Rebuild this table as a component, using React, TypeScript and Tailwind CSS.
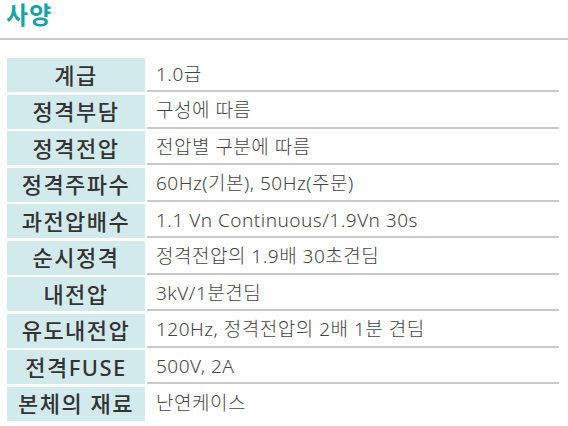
import React from "react";

const rows: [string, string][] = [
  ["계급", "1.0급"],
  ["정격부담", "구성에 따름"],
  ["정격전압", "전압별 구분에 따름"],
  ["정격주파수", "60Hz(기본), 50Hz(주문)"],
  ["과전압배수", "1.1 Vn Continuous/1.9Vn 30s"],
  ["순시정격", "정격전압의 1.9배 30초견딤"],
  ["내전압", "3kV/1분견딤"],
  ["유도내전압", "120Hz, 정격전압의 2배 1분 견딤"],
  ["전격FUSE", "500V, 2A"],
  ["본체의 재료", "난연케이스"],
];

export default function App() {
  return (
    <div
      className="w-[568px] h-[426px] bg-white overflow-hidden"
      style={{ fontFamily: '"Noto Sans", "Noto Sans CJK KR", sans-serif' }}
    >
      <div className="h-[38px] pl-[6px] flex items-center pb-[8px]">
        <h2 className="text-[24px] leading-[30px] font-bold text-[#17a2a5] tracking-[1px]">사양</h2>
      </div>
      <div className="h-[2px] bg-[#c9c9c9]" />
      <div className="pl-[7px] pr-[9px] pt-[18px] flex flex-col gap-[2.5px]">
        {rows.map(([k, v], i) => (
          <div key={i} className="flex h-[34px]">
            <div className="w-[138px] bg-[#d3eaed] flex items-center justify-center text-[22px] font-medium text-[#333] tracking-[1.5px] whitespace-nowrap">
              {k}
            </div>
            <div
              className={
                "flex-1 ml-[2px] flex items-center pl-[9px] text-[19px] font-light text-[#444] tracking-[0.5px] whitespace-nowrap " +
                (i < rows.length - 1 ? "border-b-2 border-[#c9c9c9]" : "")
              }
            >
              {v}
            </div>
          </div>
        ))}
      </div>
    </div>
  );
}
